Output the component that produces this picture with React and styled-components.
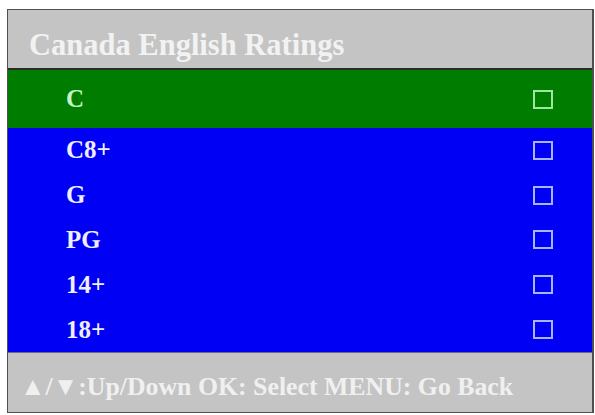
import React from 'react';
import styled, { createGlobalStyle } from 'styled-components';

const ratings = ['C', 'C8+', 'G', 'PG', '14+', '18+'];

const App = () => {
  const selected = 0;

  return (
    <>
      <GlobalStyle />
      <Frame>
        <TitleBar>Canada English Ratings</TitleBar>
        <List>
          {ratings.map((r, i) => (
            <Row key={r} active={i === selected} tall={i === selected}>
              <Label active={i === selected}>{r}</Label>
              <Check active={i === selected} />
            </Row>
          ))}
        </List>
        <Footer>▲/▼:Up/Down OK: Select MENU: Go Back</Footer>
      </Frame>
    </>
  );
};

const GlobalStyle = createGlobalStyle`
  body {
    margin: 0;
    background: #ffffff;
    font-family: "Liberation Serif", "Times New Roman", serif;
  }
`;

const Frame = styled.div`
  width: 584px;
  margin: 9px 0 0 7px;
  border: 1px solid #505050;
  border-right-width: 2px;
  display: flex;
  flex-direction: column;
`;

const TitleBar = styled.div`
  height: 60px;
  box-sizing: border-box;
  padding: 12px 0 0 21px;
  background: #c4c4c4;
  border-bottom: 2px solid #2a2a2a;
  display: flex;
  align-items: center;
  color: #f2f2f2;
  font-size: 30.5px;
  font-weight: bold;
`;

const List = styled.div`
  display: flex;
  flex-direction: column;
  background: #0000f4;
`;

const Row = styled.div`
  height: ${(p) => (p.tall ? '58px' : '44.8px')};
  background: ${(p) => (p.active ? '#007c00' : '#0000f4')};
  display: flex;
  align-items: center;
  justify-content: space-between;
  padding: 0 39px 0 58px;
`;

const Label = styled.span`
  color: ${(p) => (p.active ? '#c4f5c4' : '#eeeeff')};
  font-size: 25px;
  font-weight: bold;
`;

const Check = styled.span`
  width: 20px;
  height: 19px;
  box-sizing: border-box;
  border: 2px solid ${(p) => (p.active ? '#9ce89c' : '#a8b4ff')};
`;

const Footer = styled.div`
  height: 60px;
  box-sizing: border-box;
  padding: 10px 0 0 12px;
  background: #c4c4c4;
  border-top: 1px solid #6a6a8a;
  display: flex;
  align-items: center;
  color: #f0f0f0;
  font-size: 25.8px;
  font-weight: bold;
`;

export default App;
